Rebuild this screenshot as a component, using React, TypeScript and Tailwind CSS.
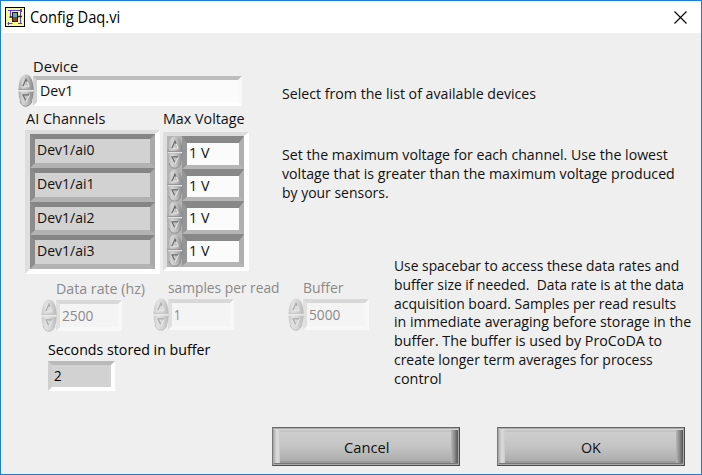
import { useLayoutEffect, useRef, useState } from "react";
import clsx from "clsx";

/** One line of text, condensed or widened to a given width. */
function Line({ text, width, className }: { text: string; width: number; className?: string }) {
  const ref = useRef<HTMLSpanElement>(null);
  const [scale, setScale] = useState(1);
  useLayoutEffect(() => {
    if (ref.current) setScale(width / ref.current.offsetWidth);
  }, [text, width]);
  return (
    <div className={clsx("whitespace-pre", className ?? "h-[19px] leading-[19px]")} style={{ width }}>
      <span ref={ref} className="inline-block origin-left" style={{ transform: `scaleX(${scale})` }}>
        {text}
      </span>
    </div>
  );
}

function Spinner({ className }: { className?: string }) {
  return (
    <svg className={clsx("relative z-10 shrink-0", className)} width="16" height="33" viewBox="0 0 16 33">
      <defs>
        <linearGradient id="knob" x1="0" y1="0" x2="1" y2="0">
          <stop offset="0" stopColor="#a8a8a8" />
          <stop offset="0.28" stopColor="#d6d6d6" />
          <stop offset="0.6" stopColor="#bebebe" />
          <stop offset="1" stopColor="#858585" />
        </linearGradient>
      </defs>
      <path d="M0.5 15.5C0.8 7 3 0.5 8 0.5s7.2 6.5 7.5 15z" fill="url(#knob)" />
      <path d="M0.5 17.5C0.8 26 3 32.5 8 32.5s7.2-6.5 7.5-15z" fill="url(#knob)" />
      <path d="M0.5 15.3h15M2 27c1.3 4 3.5 5.2 6 5.2s4.8-1.6 6-5.2" fill="none" stroke="#8a8a8a" strokeWidth="0.9" />
      <path d="M1 16.6h14" stroke="#e6e6e6" strokeWidth="1.1" />
      <path d="M8.2 5.5l3 6.7H5" stroke="#e8e8e8" strokeWidth="1" fill="none" />
      <path d="M4.8 12.2L8 5.2l1.1 2.6" stroke="#6a6a6a" strokeWidth="1.2" fill="none" />
      <path d="M11.3 21L8.2 27.8" stroke="#e8e8e8" strokeWidth="1" />
      <path d="M11 20.8H5l2.6 5.4" stroke="#6a6a6a" strokeWidth="1.2" fill="none" />
    </svg>
  );
}

function DisabledField({ label, labelWidth, value, valueWidth }: { label: string; labelWidth: number; value: string; valueWidth: number }) {
  return (
    <div className="w-[81px] text-[#8a8a8a]">
      <div className="pl-[15px]">
        <Line text={label} width={labelWidth} />
      </div>
      <div className="mt-px flex">
        <Spinner className="opacity-50" />
        <div className="-ml-px mt-[1px] h-[31px] w-[68px] border-4 border-t-[#d8d8d8] border-r-[#f8f8f8] border-b-[#f8f8f8] border-l-[#e0e0e0] bg-[#f4f4f4] pl-[2px] pt-[2px]">
          <Line text={value} width={valueWidth} />
        </div>
      </div>
    </div>
  );
}

function Button({ text, width }: { text: string; width: number }) {
  return (
    <div className="h-[39px] w-[188px] border border-t-[#686868] border-r-[#4b4b4b] border-b-[#4b4b4b] border-l-[#777] bg-[#aaa] p-px">
      <div className="flex h-full w-full border-t border-b border-t-[#d6d6d6] border-b-[#777] bg-linear-to-b from-[#d6d6d6] via-[#c8c8c8] to-[#a8a8a8]">
        <div className="w-[6px] bg-linear-to-r from-[#b4b4b4] via-[#dedede] to-[#c9c9c9]" />
        <div className="flex flex-1 items-center justify-center border-t-2 border-b-2 border-t-[#c4c4c4] border-b-[#9b9b9b] bg-linear-to-b from-[#cecece] via-[#c4c4c4] to-[#adadad] pt-px pl-px">
          <Line text={text} width={width} />
        </div>
        <div className="w-[7px] bg-linear-to-r from-[#b8b8b8] via-[#8c8c8c] to-[#565656]" />
      </div>
    </div>
  );
}

const deviceHelp: [string, number][] = [
  ["Set the maximum voltage for each channel. Use the lowest", 386],
  ["voltage that is greater than the maximum voltage produced", 393],
  ["by your sensors.", 107],
];

const bufferHelp: [string, number][] = [
  ["Use spacebar to access these data rates and", 285],
  ["buffer size if needed.  Data rate is at the data", 290],
  ["acquisition board. Samples per read results", 282],
  ["in immediate averaging before storage in the", 297],
  ["buffer. The buffer is used by ProCoDA to", 268],
  ["create longer term averages for process", 259],
  ["control", 48],
];

export default function App() {
  return (
    <div className="flex h-[475px] w-[702px] flex-col overflow-hidden border border-[#1b7fd4] bg-[#efefef] font-['Open_Sans','Noto_Sans',sans-serif] text-[15px] text-[#111]">
      <header className="flex h-8 shrink-0 items-center bg-white pl-1">
        <svg width="20" height="20" viewBox="0 0 20 20">
          <rect x="0.5" y="0.5" width="19" height="19" fill="#f9f99c" stroke="#000" />
          <path d="M3 3.5h14M5.5 4v6M15.5 2v15M2.5 16.5h5M13 16.5h4M3.5 15v3M16.5 2v3" stroke="#5a3fe0" strokeWidth="1" />
          <path d="M7 10H4.5M13 9.5h4" stroke="#222" strokeWidth="1.5" />
          <rect x="7" y="5" width="6" height="10" fill="#1e1e1e" />
          <rect x="8" y="6" width="4" height="4" fill="#6fa6b4" />
          <rect x="8" y="10" width="4" height="4" fill="#8c461f" />
        </svg>
        <div className="ml-[5px] text-[15.5px] text-black">
          <Line text="Config Daq.vi" width={90} className="h-5 leading-5" />
        </div>
        <svg className="mr-[14px] ml-auto" width="13" height="13" viewBox="0 0 13 13">
          <path d="M0.5 0.5l12 12M12.5 0.5l-12 12" stroke="#000" strokeWidth="1.1" />
        </svg>
      </header>

      <section className="flex h-[241px] shrink-0 pt-6">
        <div className="w-[281px] shrink-0">
          <div className="pl-[32px]">
            <Line text="Device" width={45} />
          </div>
          <div className="-mt-[2px] flex h-[33px] pl-[17px]">
            <Spinner />
            <div className="-ml-px mt-[2px] h-[30px] w-[209px] border-4 border-t-[#bdbdbd] border-r-[#f9f9f9] border-b-[#fff] border-l-[#d2d2d2] bg-[#fbfbfb] pl-[3px] pt-[1px]">
              <Line text="Dev1" width={33} />
            </div>
          </div>
          <div className="mt-[2px] flex">
            <div className="ml-6 w-[135px]">
              <div className="pl-[1px]">
                <Line text="AI Channels" width={79} />
              </div>
              <div className="mt-[2px] h-[144px] border-[5px] border-t-4 border-t-[#dcdcdc] border-r-[#fff] border-b-[#fff] border-l-[#dedede] bg-[#aaa]">
                {["Dev1/ai0", "Dev1/ai1", "Dev1/ai2", "Dev1/ai3"].map((name) => (
                  <div key={name} className="h-[33.75px] border-[5px] border-t-[#858585] border-r-[#a9a9a9] border-b-[#b2b2b2] border-l-[#8b8b8b] bg-[#d2d2d2] pl-[2px] pt-[1px]">
                    <Line text={name} width={58} />
                  </div>
                ))}
              </div>
            </div>
            <div className="ml-[3px] w-[86px]">
              <div>
                <Line text="Max Voltage" width={82} />
              </div>
              <div className="mt-[4px] h-[139px] border-4 border-r-[5px] border-t-[#dcdcdc] border-r-[#fff] border-b-[#fff] border-l-[#dedede] bg-[#b4b4b4]">
                {[0, 1, 2, 3].map((channel) => (
                  <div key={channel} className="flex h-[32.6px]">
                    <Spinner />
                    <div className="ml-[-1px] flex-1 border-[5px] border-t-[7px] border-b-[4px] border-t-[#888] border-r-[#b0b0b0] border-b-[#b6b6b6] border-l-[#969696] bg-[#fbfbfb] pl-[2px]">
                      <Line text="1 V" width={20} />
                    </div>
                  </div>
                ))}
              </div>
            </div>
          </div>
        </div>
        <div className="pt-[27px]">
          <Line text="Select from the list of available devices" width={254} />
          <div className="mt-[42px]">
            {deviceHelp.map(([text, width]) => (
              <Line key={text} text={text} width={width} />
            ))}
          </div>
        </div>
      </section>

      <section className="flex h-[153px] shrink-0">
        <div className="w-[393px] shrink-0 pt-[4px]">
          <div className="flex items-start pl-[40px]">
            <div className="pt-px">
              <DisabledField label="Data rate (hz)" labelWidth={89} value="2500" valueWidth={31} />
            </div>
            <div className="ml-[31px]">
              <DisabledField label="samples per read" labelWidth={112} value="1" valueWidth={7} />
            </div>
            <div className="ml-[54px]">
              <DisabledField label="Buffer" labelWidth={41} value="5000" valueWidth={31} />
            </div>
          </div>
          <div className="mt-[8px] pl-[47px] text-black">
            <Line text="Seconds stored in buffer" width={162} />
            <div className="mt-[2px] h-[30px] w-[67px] border-4 border-t-[#b9b9b9] border-r-[#fff] border-b-[#fff] border-l-[#cfcfcf] bg-[#d2d2d2] pl-[2px] pt-[1px]">
              <Line text="2" width={8} />
            </div>
          </div>
        </div>
        <div className="-mt-[18px]">
          {bufferHelp.map(([text, width]) => (
            <Line key={text} text={text} width={width} className="h-[18.75px] leading-[18.75px]" />
          ))}
        </div>
      </section>

      <footer className="flex gap-[37px] pl-[271px]">
        <Button text="Cancel" width={45} />
        <Button text="OK" width={20} />
      </footer>
    </div>
  );
}
